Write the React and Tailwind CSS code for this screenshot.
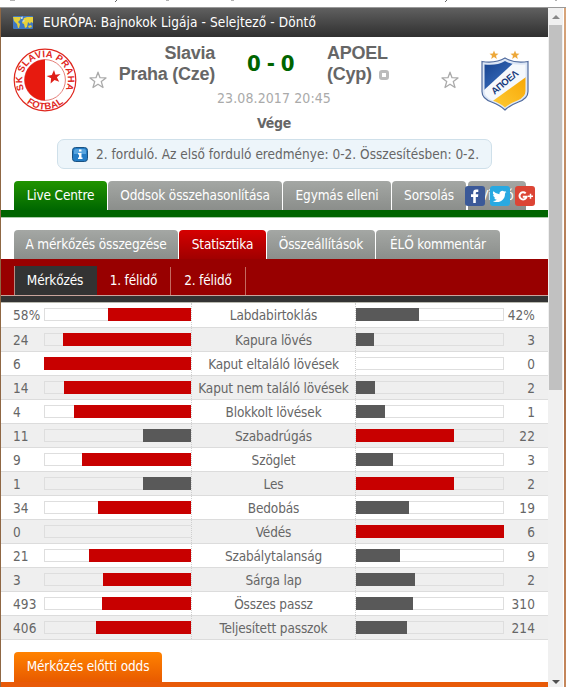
import { clsx } from 'clsx'

// bar widths are in pixels, out of 147 (home) and 148 (away)
const stats = [
  { label: 'Labdabirtoklás', home: '58%', away: '42%', homeBar: 83, awayBar: 63 },
  { label: 'Kapura lövés', home: '24', away: '3', homeBar: 128, awayBar: 18 },
  { label: 'Kaput eltaláló lövések', home: '6', away: '0', homeBar: 147, awayBar: 0 },
  { label: 'Kaput nem találó lövések', home: '14', away: '2', homeBar: 127, awayBar: 19 },
  { label: 'Blokkolt lövések', home: '4', away: '1', homeBar: 117, awayBar: 29 },
  { label: 'Szabadrúgás', home: '11', away: '22', homeBar: 48, awayBar: 98 },
  { label: 'Szöglet', home: '9', away: '3', homeBar: 109, awayBar: 37 },
  { label: 'Les', home: '1', away: '2', homeBar: 48, awayBar: 98 },
  { label: 'Bedobás', home: '34', away: '19', homeBar: 93, awayBar: 53 },
  { label: 'Védés', home: '0', away: '6', homeBar: 0, awayBar: 148 },
  { label: 'Szabálytalanság', home: '21', away: '9', homeBar: 102, awayBar: 44 },
  { label: 'Sárga lap', home: '3', away: '2', homeBar: 88, awayBar: 59 },
  { label: 'Összes passz', home: '493', away: '310', homeBar: 89, awayBar: 57 },
  { label: 'Teljesített passzok', home: '406', away: '214', homeBar: 95, awayBar: 51 },
]

const tabBase = 'h-[29px] shrink-0 rounded-t-[4px] flex items-center justify-center pb-px text-white whitespace-nowrap'
const grayTab = 'bg-linear-to-b from-[#a4a7a4] to-[#8b8e8b]'

function Star() {
  return (
    <svg width="18" height="18" viewBox="0 0 18 18" fill="#fff" stroke="#aaa" strokeWidth="1.3" strokeLinejoin="round">
      <path d="M9 1.2l2 5.500 6 .2-4.700 3.700 1.700 5.900L9 13.200l-5 3.300 1.700-5.900L1 6.900l6-.2z" />
    </svg>
  )
}

function WorldIcon() {
  return (
    <svg width="20" height="13" viewBox="0 0 20 13">
      <rect width="20" height="13" rx="1" fill="#3f78c4" />
      <path d="M0 1h8l-1 3-2 2 2 2-1 4H5L4 8 1 5z" fill="#e2cf3d" />
      <path d="M11 2l3-1h6v6l-2-1-1 2-2-2-1 5-2 1-1-4-2-1z" fill="#e8d23c" />
      <path d="M15 10l3-1 1 2-3 1z" fill="#e5cc38" />
      <path d="M8 1l2-.5L9.500 3 8 3zM9 5l2-1 1 1-2 1z" fill="#c8d9e8" />
    </svg>
  )
}

function SlaviaLogo() {
  return (
    <svg width="64" height="64" viewBox="0 0 64 64" className="text-[#df261d]">
      <defs>
        <path id="ringTop" d="M11.500 42 A22.800 22.800 0 1 1 52.500 42" />
        <path id="ringBottom" d="M6.150 46 A29.400 29.400 0 0 0 57.850 46" />
      </defs>
      <circle cx="32" cy="32" r="30.800" fill="#fff" stroke="currentColor" strokeWidth="1.200" />
      <circle cx="32" cy="32" r="20.400" fill="#fff" stroke="#e5807a" strokeWidth="1" />
      <path d="M32 11.500a20.500 20.500 0 0 0 0 41z" fill="#e71a0f" />
      <path d="M41 22l1.500 4.700 5-.7-3.600 3.300 2.300 4.500-4.700-1.800-3.900 3.500.5-5.200-4.500-2.200 5.200-1z" fill="#df1f18" />
      <text className="font-['Liberation_Sans'] text-[9.5px] font-bold tracking-normal" fill="currentColor">
        <textPath href="#ringTop" startOffset="0.5" textLength="91">SK SLAVIA PRAHA</textPath>
      </text>
      <text className="font-['Liberation_Sans'] text-[9.5px] font-bold tracking-normal" fill="currentColor">
        <textPath href="#ringBottom" startOffset="11.5" textLength="40">FOTBAL</textPath>
      </text>
    </svg>
  )
}

function ApoelLogo() {
  return (
    <svg width="50" height="62" viewBox="0 0 50 62">
      <defs>
        <linearGradient id="apoelBlue" x1="0" y1="0" x2="1" y2="1">
          <stop offset="0" stopColor="#123c87" />
          <stop offset=".5" stopColor="#2b5caa" />
          <stop offset="1" stopColor="#173f86" />
        </linearGradient>
        <linearGradient id="apoelGold" x1="1" y1="0" x2="0" y2="1">
          <stop offset="0" stopColor="#f7a400" />
          <stop offset="1" stopColor="#ffce3a" />
        </linearGradient>
        <clipPath id="apoelShield">
          <path d="M4.500 14.500q12 1.500 20.500-3.500 9 5 20.500 3.500v26.500q0 6-8 9.500-8 3-12.500 7-4.500-4-12.500-7-8-3.500-8-9.500z" />
        </clipPath>
      </defs>
      <path d="M14 .5l1.200 3 3.300.2-2.500 2 .8 3.200-2.800-1.800-2.800 1.800.8-3.200-2.500-2 3.300-.2zM35 .5l1.200 3 3.300.2-2.500 2 .8 3.200-2.800-1.800-2.800 1.800.8-3.200-2.500-2 3.300-.2z" fill="#eda83a" />
      <path d="M2 11.500q14 2 23-3.500 9 5.500 23 3.500v30q0 7-9.500 10.500-9 3.500-13.500 8-4.500-4.500-13.500-8Q2 48.500 2 41.500z" fill="#dce6f5" stroke="#506b9e" strokeWidth="1.200" />
      <g clipPath="url(#apoelShield)">
        <path d="M0 8h50v54H0z" fill="#f5f8fc" />
        <path d="M0 8h39L4 40H0z" fill="url(#apoelBlue)" />
        <path d="M50 24v38H20L10 53z" fill="url(#apoelGold)" />
      </g>
      <text transform="translate(14.500 45) rotate(-40)" textLength="32" className="font-['Liberation_Sans'] text-[9.5px] font-bold tracking-normal" fill="#173b7c">ΑΠΟΕΛ</text>
    </svg>
  )
}

function InfoIcon() {
  return (
    <svg width="16" height="15" viewBox="0 0 16 15">
      <rect x=".5" y=".5" width="15" height="14" rx="3" fill="#247cc5" stroke="#1a5282" />
      <path d="M2 4q0-2 2-2h8q2 0 2 2v3H2z" fill="#57a4df" />
      <path d="M7 2.500h2.500v2H7zM6 6h3.500v4.500h1V12H6v-1.500h1v-3H6z" fill="#fff" />
    </svg>
  )
}

function SocialButtons() {
  return (
    <div className="absolute left-[464px] top-[5px] flex gap-[5px]">
      <svg width="20" height="20" viewBox="0 0 20 20">
        <rect width="20" height="20" rx="3" fill="#3b5998" />
        <path d="M8.200 17V11H6V8.200h2.200V6.500Q8.200 3.500 11 3.500h2.300v2.600h-1.500q-1 0-1 1v1.100h2.500L13 11h-2.200v6z" fill="#fff" />
      </svg>
      <svg width="20" height="20" viewBox="0 0 20 20">
        <rect width="20" height="20" rx="3" fill="#29a9e1" />
        <path d="M16.500 6l-1.500.4 1-1.500-1.800.7a2.900 2.900 0 0 0-4.800 2.600q-3.500-.2-6-3-1.300 2.300.9 4l-1.300-.4q.2 2.200 2.300 2.800l-1.200.1q.7 1.800 2.700 2-1.800 1.400-4 1.200c5.500 3.200 12.500-.3 12.200-7.500z" fill="#fff" />
      </svg>
      <svg width="20" height="20" viewBox="0 0 20 20">
        <rect width="20" height="20" rx="3" fill="#dc4535" />
        <path d="M10.700 7.400a3.600 3.600 0 1 0 .9 3.400H7.800" fill="none" stroke="#fff" strokeWidth="2" />
        <path d="M13 10.200h5M15.500 7.700v5" stroke="#fff" strokeWidth="1.500" />
      </svg>
    </div>
  )
}

function StatRow({ stat, index }) {
  const homeLeads = stat.homeBar > stat.awayBar

  return (
    <div
      className={clsx(
        'flex border-b border-[#dcdcdc] leading-[25px] whitespace-nowrap',
        index === 0 ? 'h-[25px]' : 'h-[24px]',
        index % 2 ? 'bg-[#efefef]' : 'bg-white'
      )}
    >
      <div className="w-[43px] pl-[12px] tracking-[0.1px]">{stat.home}</div>
      <div className="mt-[5px] flex h-[13px] w-[147px] justify-end border border-r-0 border-[#dedede]">
        <div className={clsx('-my-px -ml-px h-[13px] shrink-0', homeLeads ? 'bg-[#c80000]' : 'bg-[#595959]')} style={{ width: stat.homeBar }} />
      </div>
      <div className="w-[165px] border-x border-dotted border-[#cfcfcf] text-center">{stat.label}</div>
      <div className="mt-[5px] h-[13px] w-[148px] border border-l-0 border-[#dedede]">
        <div className={clsx('-mt-px h-[13px]', homeLeads ? 'bg-[#595959]' : 'bg-[#c80000]')} style={{ width: stat.awayBar }} />
      </div>
      <div className="w-[31px] text-right tracking-[0.1px]">{stat.away}</div>
    </div>
  )
}

function Scrollbar() {
  return (
    <div className="flex h-full w-[15px] flex-col items-center bg-[#f0f0f0]">
      <div className="flex h-[17px] items-center">
        <svg width="8" height="4" viewBox="0 0 8 4"><path d="M4 0l4 4H0z" fill="#888" /></svg>
      </div>
      <div className="h-[365px] w-[13px] bg-[#c1c1c1]" />
      <div className="mt-auto pb-[3px]">
        <svg width="8" height="4" viewBox="0 0 8 4"><path d="M0 0h8L4 4z" fill="#505050" /></svg>
      </div>
    </div>
  )
}

export default function App() {
  return (
    <div className="flex h-[687px] w-[566px] flex-col overflow-hidden bg-white font-['DejaVu_Sans_Condensed','DejaVu_Sans',sans-serif] text-[13.5px] tracking-[-0.15px] text-[#666]">
      {/* bottom edge of the address bar */}
      <div className="flex h-[8px] shrink-0 border-b border-[#999] bg-white">
        <svg width="566" height="7" viewBox="0 0 566 7">
          <path d="M10 0h5M117 0l-2 2M166 0h3M231 0h3M447 0l-2 2M556 0v1" stroke="#666" strokeWidth="1" />
        </svg>
      </div>

      <div className="flex min-h-0 flex-1">
        <div className="w-px shrink-0 bg-[#8f6744]" />
        <main className="w-[547px] shrink-0">
          <div className="flex h-[29px] items-center bg-linear-to-b from-[#606060] to-[#303030] pb-px pl-[12px] text-white">
            <WorldIcon />
            <span className="ml-[10px] tracking-[0.1px] whitespace-nowrap">EURÓPA: Bajnokok Ligája - Selejtező - Döntő</span>
          </div>

          <div className="flex h-[102px]">
            <div className="w-[76px] pt-[11px] pl-[12px]"><SlaviaLogo /></div>
            <div className="w-[32px] pt-[34px] pl-[12px]"><Star /></div>
            <div className="flex flex-1 flex-col items-center">
              <div className="flex w-full font-['Liberation_Sans',sans-serif] text-[18px] leading-[21px] font-bold tracking-[-0.25px]">
                <div className="w-[106px] pt-[6px] text-right whitespace-nowrap">Slavia<br />Praha (Cze)</div>
                <div className="w-[111px] pt-[16px] text-center font-['DejaVu_Sans_Condensed','DejaVu_Sans',sans-serif] text-[22px] tracking-[-0.5px] text-[#006400]">0 - 0</div>
                <div className="pt-[6px] pl-px">
                  APOEL<br />
                  (Cyp)<span className="ml-[7px] inline-block size-[10px] rounded-[3px] border-[3px] border-[#bbb]" />
                </div>
              </div>
              <div className="mt-[3px] w-full pl-[108px] text-[14px] leading-[20px] tracking-[0.1px] text-[#aaa]">23.08.2017 20:45</div>
              <div className="mt-[5px] w-full pl-[148px] text-[14px] leading-[20px] font-bold tracking-[-0.3px]">Vége</div>
            </div>
            <div className="w-[39px] pt-[34px]"><Star /></div>
            <div className="w-[68px] pt-[13px]"><ApoelLogo /></div>
          </div>

          <div className="mx-[56px] flex h-[30px] items-center rounded-[7px] border border-[#cfe0ea] bg-[#edf5fa] pl-[14px]">
            <InfoIcon />
            <span className="ml-[8px] pt-px tracking-[0.01px] whitespace-nowrap">2. forduló. Az első forduló eredménye: 0-2. Összesítésben: 0-2.</span>
          </div>

          <div className="relative mt-[12px] flex gap-px pl-[13px]">
            <div className={clsx(tabBase, 'w-[93px] bg-linear-to-b from-[#209400] to-[#006700]')}>Live Centre</div>
            <div className={clsx(tabBase, grayTab, 'w-[174px]')}>Oddsok összehasonlítása</div>
            <div className={clsx(tabBase, grayTab, 'w-[108px]')}>Egymás elleni</div>
            <div className={clsx(tabBase, grayTab, 'w-[74px]')}>Sorsolás</div>
            <div className={clsx(tabBase, grayTab, 'ml-px w-[58px]')}>Videó</div>
            <SocialButtons />
          </div>
          <div className="h-[8px] border-b border-[#a9cca9] bg-[#006400]" />

          <div className="mt-[12px] flex gap-px pl-[13px]">
            <div className={clsx(tabBase, grayTab, 'w-[164px]')}>A mérkőzés összegzése</div>
            <div className={clsx(tabBase, 'w-[87px] bg-linear-to-b from-[#d60000] to-[#a00000]')}>Statisztika</div>
            <div className={clsx(tabBase, grayTab, 'w-[108px]')}>Összeállítások</div>
            <div className={clsx(tabBase, grayTab, 'w-[124px]')}>ÉLŐ kommentár</div>
          </div>
          <div className="flex h-[36px] items-end bg-[#980000] pl-[13px] text-white">
            <div className="flex h-[29px] w-[83px] items-center justify-center border-l border-[#b98a80] bg-[#333] pr-[2px] pb-px">Mérkőzés</div>
            <div className="flex h-[28px] w-[74px] items-center justify-center border-r border-[#c46a60] pb-[2px]">1. félidő</div>
            <div className="flex h-[28px] w-[75px] items-center justify-center border-r border-[#c46a60] pb-[2px]">2. félidő</div>
          </div>
          <div className="h-[8px] border-y border-t-[#c9a49c] border-b-[#b9b9b0] bg-[#333]" />

          {stats.map((stat, i) => (
            <StatRow key={stat.label} stat={stat} index={i} />
          ))}

          <div className="mt-[12px] pl-[13px]">
            <div className="flex h-[30px] w-[148px] items-center justify-center rounded-t-[4px] bg-linear-to-b from-[#ff8200] to-[#e85a00] pb-[2px] text-white">Mérkőzés előtti odds</div>
          </div>
          <div className="h-[6px] bg-[#e85a08]" />
        </main>
        <Scrollbar />
        <div className="w-[3px] border-l border-white bg-linear-to-b from-[#d8a57b] via-[#a56d48] to-[#c5875c]" />
      </div>
    </div>
  )
}
